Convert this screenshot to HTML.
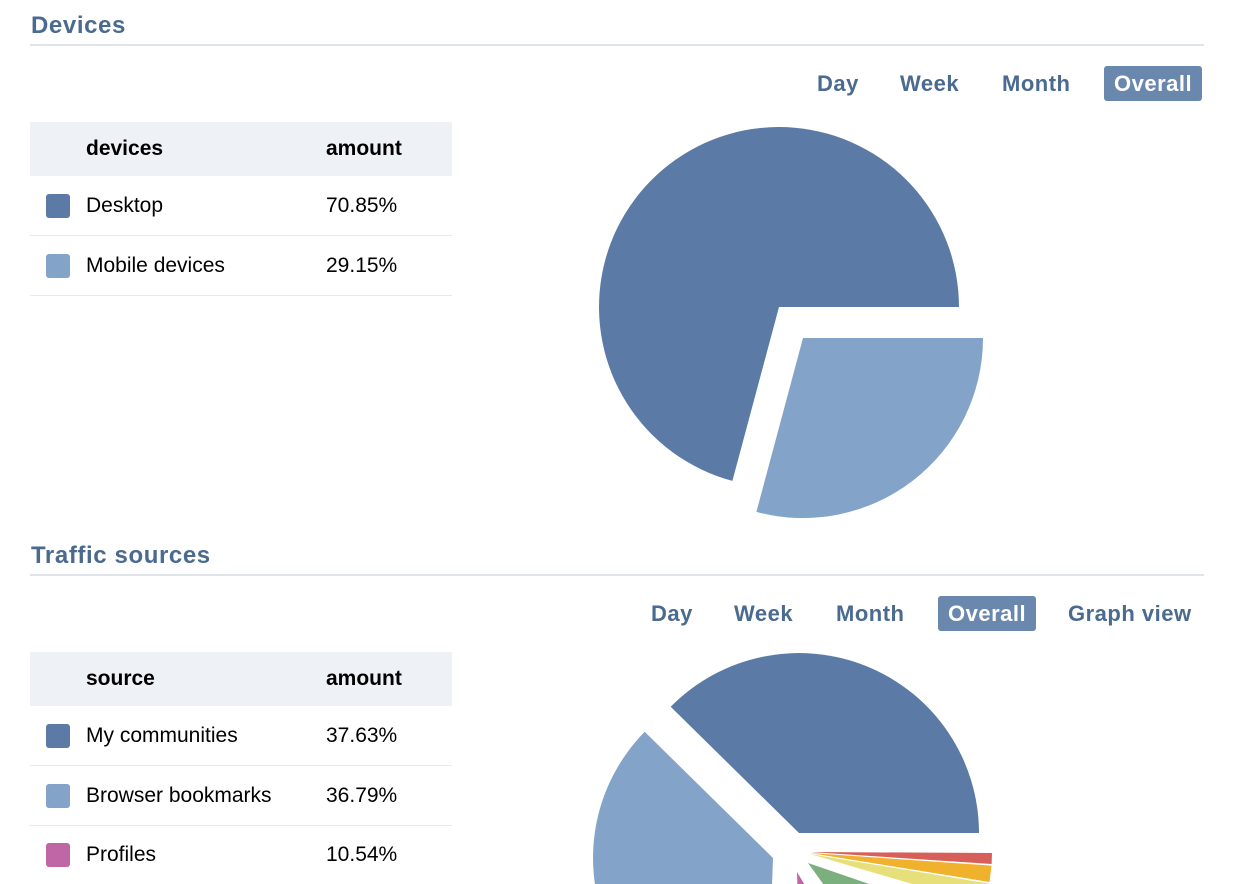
<!DOCTYPE html>
<html><head><meta charset="utf-8"><style>
html,body{margin:0;width:1242px;height:884px;overflow:hidden}
body{background:#fff;font-family:"Liberation Sans",Arial,sans-serif;position:relative}
.h{position:absolute;left:31px;font-size:24px;font-weight:bold;color:#4a6a8f;letter-spacing:0.6px}
.line{position:absolute;left:30px;width:1174px;height:2px;background:#dfe4ea}
.tab{position:absolute;font-size:22px;font-weight:bold;color:#4a6a8f;line-height:35px;height:35px;letter-spacing:0.5px}
.act{background:#6a88ad;color:#fff;border-radius:3px;padding:0 10px}
.tbl{position:absolute;left:30px;width:422px;font-size:21px;color:#000}
.th{height:54px;background:#eef1f6;position:relative;font-weight:bold}
.tr{height:59px;border-bottom:1px solid #e6e9ee;position:relative}
.c1{position:absolute;left:56px;top:50%;transform:translateY(-50%)}
.c2{position:absolute;left:296px;top:50%;transform:translateY(-50%)}
.sw{position:absolute;left:16px;top:50%;margin-top:-12px;width:24px;height:24px;border-radius:3px}
svg{position:absolute;left:0;top:0}
</style></head><body>
<div class="h" style="top:12px">Devices</div>
<div class="line" style="top:44px"></div>
<div class="tab" style="left:817px;top:66px">Day</div>
<div class="tab" style="left:900px;top:66px">Week</div>
<div class="tab" style="left:1002px;top:66px">Month</div>
<div class="tab act" style="left:1104px;top:66px">Overall</div>
<div class="tbl" style="top:122px">
<div class="th"><span class="c1">devices</span><span class="c2">amount</span></div>
<div class="tr"><span class="sw" style="background:#5b7ba6"></span><span class="c1">Desktop</span><span class="c2">70.85%</span></div>
<div class="tr"><span class="sw" style="background:#83a3c9"></span><span class="c1">Mobile devices</span><span class="c2">29.15%</span></div>
</div>

<div class="h" style="top:542px">Traffic sources</div>
<div class="line" style="top:574px"></div>
<div class="tab" style="left:651px;top:596px">Day</div>
<div class="tab" style="left:734px;top:596px">Week</div>
<div class="tab" style="left:836px;top:596px">Month</div>
<div class="tab act" style="left:938px;top:596px">Overall</div>
<div class="tab" style="left:1068px;top:596px">Graph view</div>
<div class="tbl" style="top:652px">
<div class="th"><span class="c1">source</span><span class="c2">amount</span></div>
<div class="tr"><span class="sw" style="background:#5b7ba6"></span><span class="c1">My communities</span><span class="c2">37.63%</span></div>
<div class="tr"><span class="sw" style="background:#83a3c9"></span><span class="c1">Browser bookmarks</span><span class="c2">36.79%</span></div>
<div class="tr" style="height:58px;border:none"><span class="sw" style="background:#c065a5"></span><span class="c1">Profiles</span><span class="c2">10.54%</span></div>
</div>

<svg width="1242" height="884" viewBox="0 0 1242 884">
<path d="M779,307 L732.4,480.9 A180,180 0 1 1 959,307 Z" fill="#5b7ba6"/>
<path d="M803,338 L983,338 A180,180 0 0 1 756.4,511.9 Z" fill="#83a3c9"/>
<path d="M799,833 L670.7,706.8 A180,180 0 0 1 979,833 Z" fill="#5b7ba6"/>
<path d="M773,858 L766.4,1037.9 A180,180 0 0 1 644.7,731.8 Z" fill="#83a3c9"/>
<path d="M810,852 L992,853 L991.6,864 Z" fill="#d65f5a"/>
<path d="M810,853 L991.5,865.6 L989.5,882 Z" fill="#f0b12c"/>
<path d="M810,854 L989.2,883.6 L984,905 Z" fill="#e7e07a"/>
<path d="M808,863 L980,922 L900,990 Z" fill="#7bb07e"/>
<path d="M797,872 L850,960 L800,970 Z" fill="#c065a5"/>
</svg>
</body></html>
